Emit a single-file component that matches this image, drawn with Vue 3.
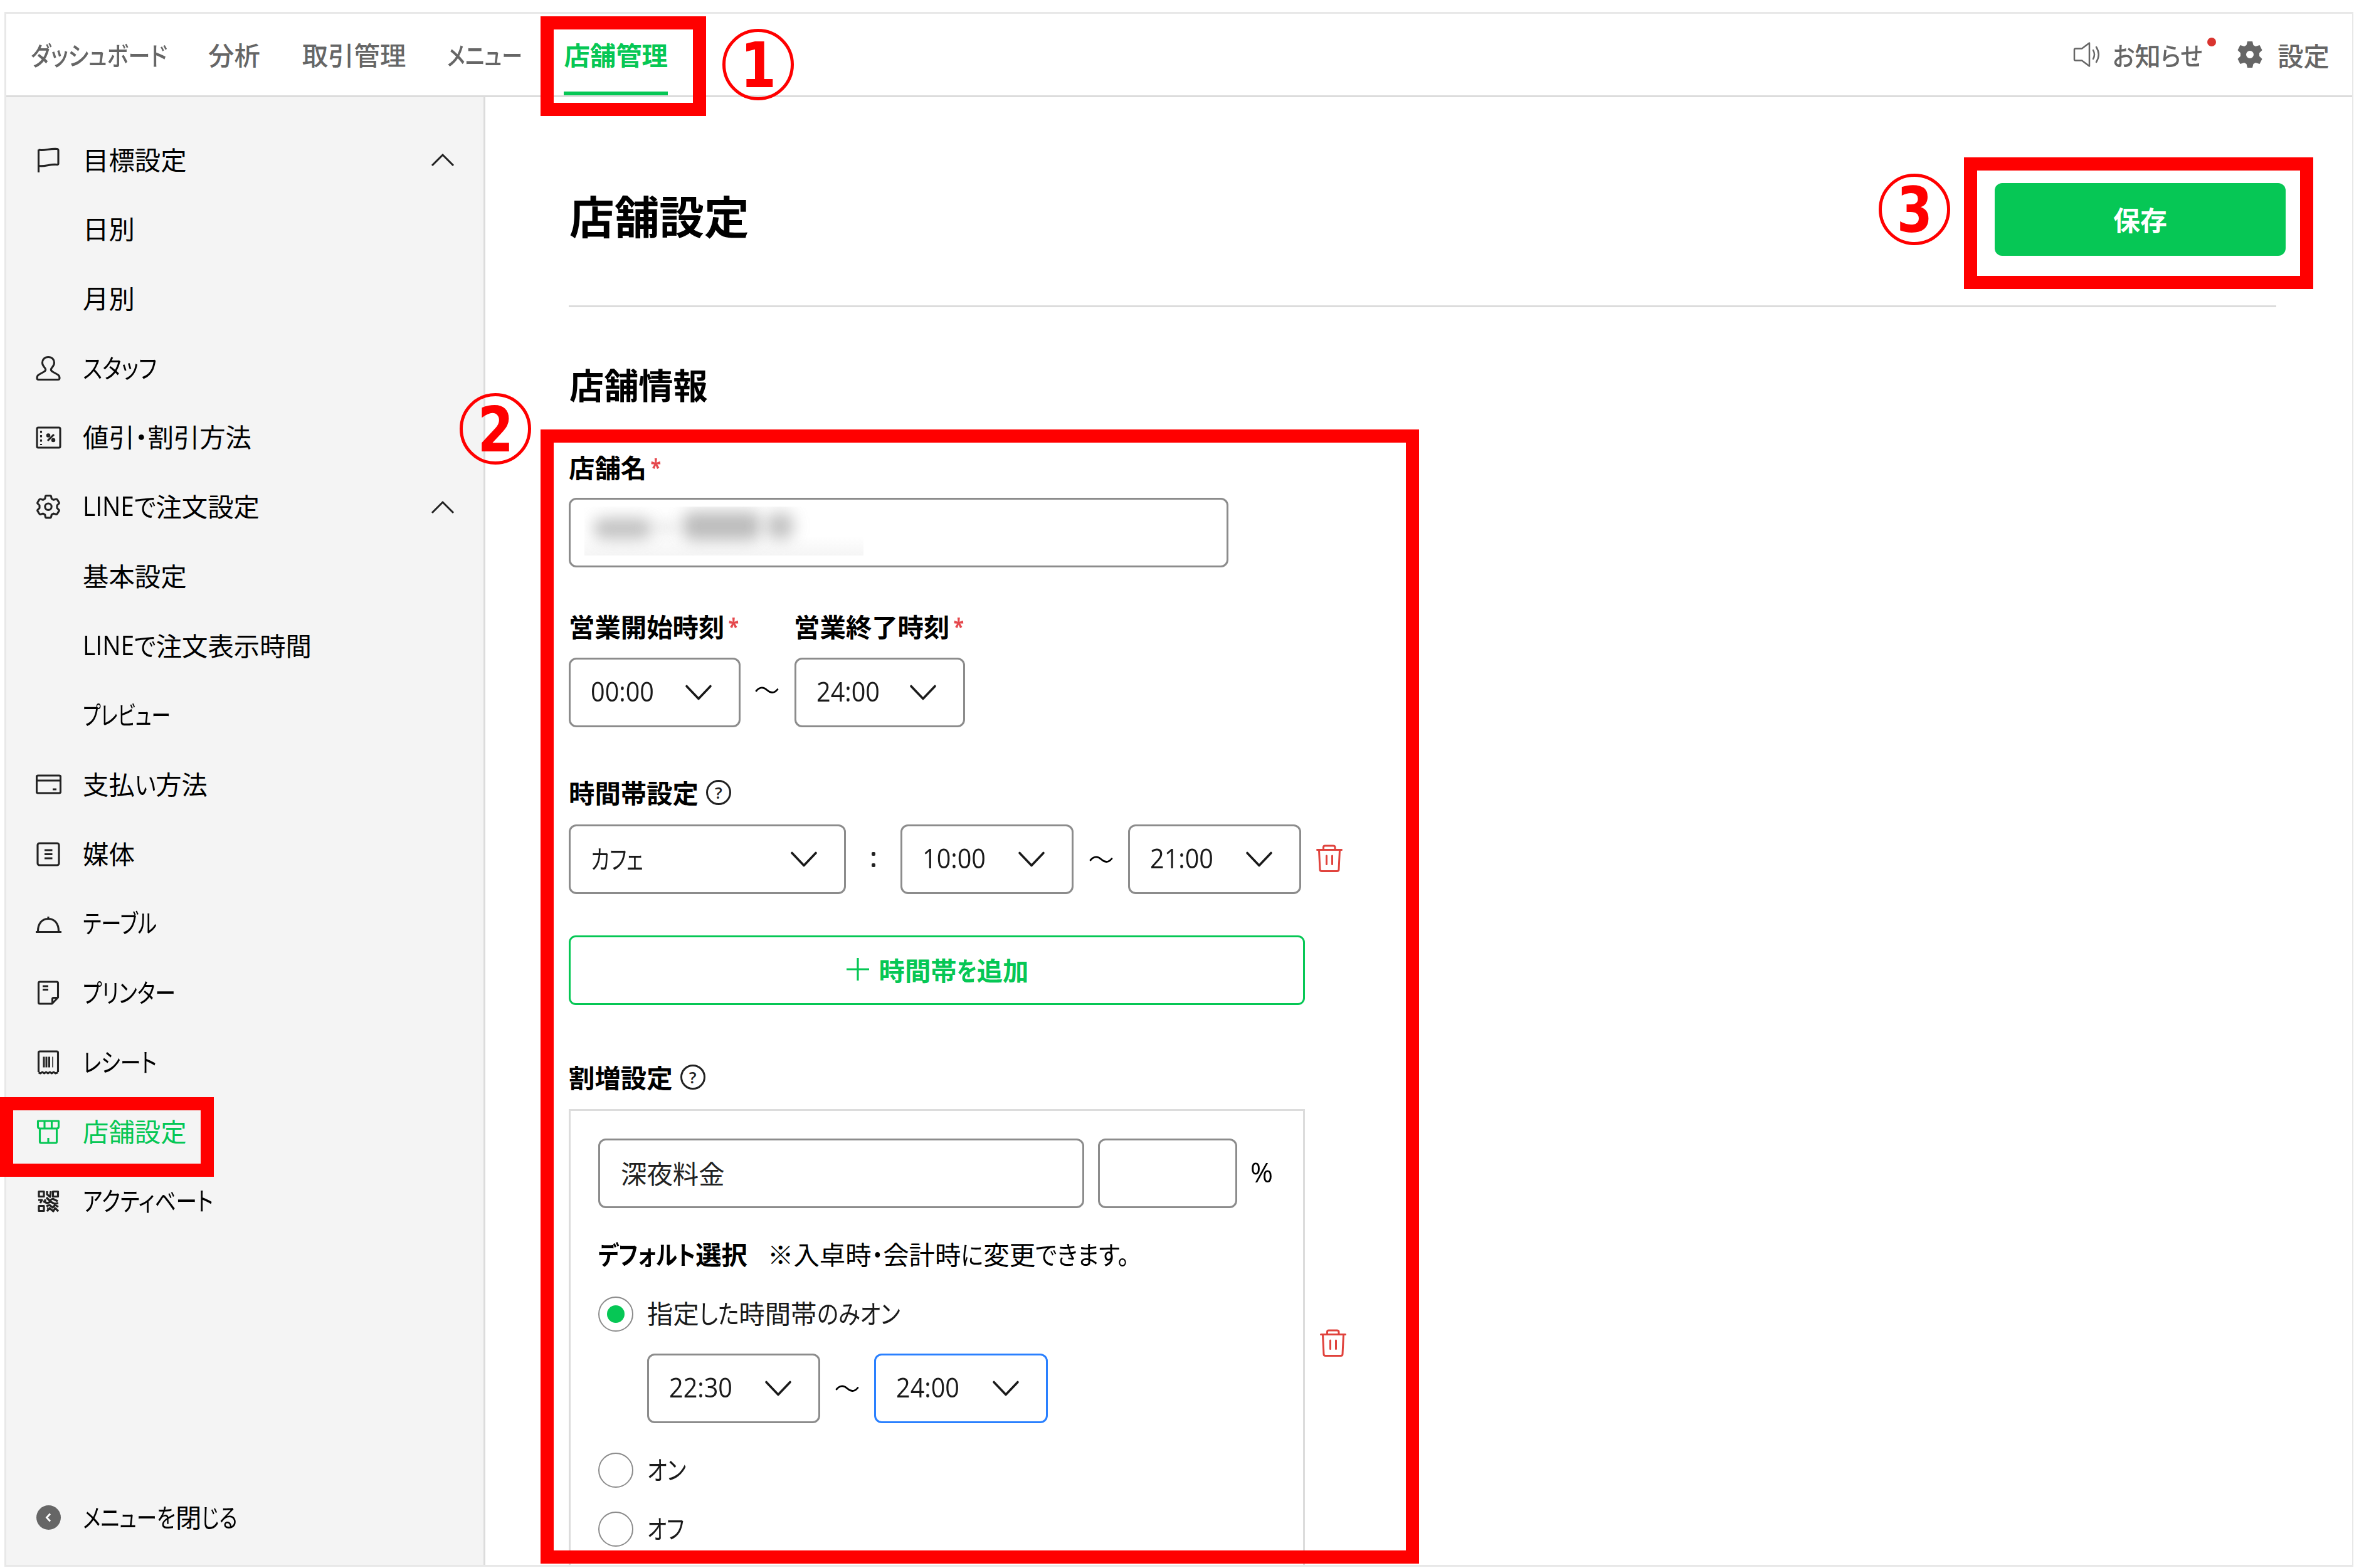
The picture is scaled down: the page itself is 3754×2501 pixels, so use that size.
<script setup>
import { ref, h, onMounted, defineComponent } from 'vue'

// Text set to a given advance width: kanji keep their full width,
// kana and latin runs are condensed to fill what is left.
const Txt = defineComponent({
  props: { s: String, w: Number },
  setup(props) {
    const root = ref(null)
    const widths = ref([])
    const scale = ref(1)
    const runs = props.s.match(/[\u4e00-\u9fff※]+|[\x21-\x7e]+|[^\u4e00-\u9fff※\x21-\x7e]+/g) || []
    const rigid = (r) => /^[\u4e00-\u9fff※]/.test(r)
    onMounted(() => {
      const els = [...root.value.querySelectorAll('.run')]
      const ws = els.map((e) => e.getBoundingClientRect().width)
      let fixed = 0
      let soft = 0
      ws.forEach((v, i) => { if (rigid(runs[i])) fixed += v; else soft += v })
      if (props.w && soft) scale.value = (props.w - fixed) / soft
      widths.value = ws
    })
    return () => h('span', { class: 'txt', ref: root }, runs.map((r, i) => {
      const cls = ['run', { latin: /^[\x21-\x7e]/.test(r), kana: !rigid(r) }]
      if (rigid(r)) return h('span', { class: cls }, r)
      const w = widths.value[i]
      return h('span', { class: 'slot', style: w ? { width: w * scale.value + 'px' } : {} }, [
        h('span', { class: cls, style: w ? { transform: `scaleX(${scale.value})` } : {} }, r)
      ])
    }))
  }
})

const icons = {
  flag: '<path d="M4.500 40V3.500"/><path d="M4.500 4C14 6 22 1.500 34 2.500Q36 3 36 5V26Q36 28 33 27.500C22 26.500 14 31.500 4.500 29.500"/>',
  person: '<path d="M20 2.500c-6 0-9.500 4-9.500 9 0 4 2.500 6.500 4.500 9 1.500 2.500.5 4-2 5.500L5 30.500C2.500 32 2 34 2 36q0 2.500 2.500 2.500h31Q38 38.500 38 36c0-2-.5-4-3-5.500L27 26c-2.500-1.500-3.500-3-2-5.500 2-2.500 4.500-5 4.500-9 0-5-3.500-9-9.500-9z"/>',
  coupon: '<rect x="2" y="4" width="37" height="32" rx="2"/><path d="M8.500 9v23" stroke-dasharray="3.500 3.500"/><path d="M19 25l10-10"/><circle cx="20" cy="16.500" r="1.700"/><circle cx="28" cy="24" r="1.700"/>',
  gear: '<path d="M17 2.500h6q1.300 0 1.600 1.500l.7 3.500 3.200 1.800 3.500-1.200q1.500-.5 2.300.8l2.700 4.400q.8 1.200-.4 2.200L34 18v4.400l2.600 2.500q1.200 1 .4 2.200l-2.700 4.400q-.8 1.300-2.300.8l-3.500-1.200-3.200 1.800-.7 3.500q-.3 1.500-1.600 1.500h-6q-1.300 0-1.600-1.500l-.7-3.500-3.200-1.800-3.500 1.200q-1.500.5-2.300-.8L3 27.100q-.8-1.200.4-2.200L6 22.400V18l-2.600-2.500q-1.200-1-.4-2.200l2.700-4.400q.8-1.300 2.300-.8l3.500 1.200 3.200-1.800.7-3.500q.3-1.500 1.600-1.500z"/><circle cx="20" cy="20.200" r="5.200"/>',
  card: '<rect x="1.500" y="6" width="38" height="28" rx="2"/><path d="M1.500 14h38M27 28h6"/>',
  media: '<rect x="3" y="3" width="34" height="35" rx="3"/><path d="M14 14h12.500M14 20.500h12.500M14 27h12.500"/>',
  cloche: '<path d="M0 33.500h41M3.500 32.500C3.500 20 10 12.500 20 12.500S36.500 20 36.500 32.500M20 12v-3" />',
  printer: '<path d="M4.500 5q0-2 2-2h27q2 0 2 2v23l-9.500 10h-19.500q-2 0-2-2z"/><path d="M35 28.500h-6.500q-2 0-2 2V37M11 10h9M11 15.500h9"/>',
  receipt: '<path d="M4.500 36V5q0-2 2-2h27q2 0 2 2v31M4.500 36.500l3 1.500 3-2 3 2 3-2 3 2 3-2 3 2 3-2 3 2 4-1.500"/><path d="M13 11.500v17M17 11.500v17M21.500 11.500v17" stroke-width="3"/><path d="M27 11.500v17" stroke-width="1.500"/>',
  shop: '<path d="M6.500 15v21q0 2 2 2h23q2 0 2-2V15M3.500 3h33v9q0 3-3 3h-27q-3 0-3-3zM14 3v11M25.500 3v11M20 30v8"/>',
  qr: '<g stroke-width="3.200"><rect x="5" y="4.500" width="8" height="8"/><rect x="27.500" y="4.500" width="8" height="8"/><rect x="5" y="27.500" width="8" height="8"/></g><path d="M18 4v5l5 4 1-9M17 14l5 5 5-3 8 4M4 18h6l-3 5M12 20l6 3 6-2 6 3 6-1M17 28l5-2 5 4 4-4 5 3M18 36l4-5 6 5 3-5 5 5M19 31l-1 0M15 17v5" stroke-width="3.200"/>'
}

const nav = [
  { s: 'ダッシュボード', w: 218, gap: 65 },
  { s: '分析', w: 83, gap: 67 },
  { s: '取引管理', w: 166, gap: 66 },
  { s: 'メニュー', w: 120, gap: 66 },
  { s: '店舗管理', w: 166, gap: 0, active: true }
]
const menu = [
  { s: '目標設定', icon: 'flag', open: true },
  { s: '日別' },
  { s: '月別' },
  { s: 'スタッフ', w: 118, icon: 'person' },
  { s: '値引・割引方法', w: 269, icon: 'coupon' },
  { s: 'LINEで注文設定', w: 282, icon: 'gear', open: true },
  { s: '基本設定' },
  { s: 'LINEで注文表示時間', w: 365 },
  { s: 'プレビュー', w: 140 },
  { s: '支払い方法', w: 199, icon: 'card' },
  { s: '媒体', icon: 'media' },
  { s: 'テーブル', w: 118, icon: 'cloche' },
  { s: 'プリンター', w: 148, icon: 'printer' },
  { s: 'レシート', w: 118, icon: 'receipt' },
  { s: '店舗設定', icon: 'shop', active: true },
  { s: 'アクティベート', w: 208, icon: 'qr' }
]

const stroke = { fill: 'none', stroke: 'currentColor', 'stroke-linecap': 'round', 'stroke-linejoin': 'round' }
const Chevron = () => h('svg', { class: 'chev', width: 44, height: 28, viewBox: '0 0 44 28', ...stroke, 'stroke-width': 3.6 }, [h('path', { d: 'M3 3.500L22 23.500L41 3.500' })])
const Wave = () => h('svg', { class: 'wave', width: 38, height: 16, viewBox: '0 0 38 16', ...stroke, 'stroke-width': 2.8 }, [h('path', { d: 'M2 9C8 2 14 3 19 7.500S30 14 36 6.500' })])
const Trash = () => h('svg', { class: 'trash', width: 42, height: 44, viewBox: '0 0 42 44', ...stroke, 'stroke-width': 3 }, [h('path', { d: 'M1.500 8.500H40.500M11.500 8V4.500Q11.500 2 14 2H27Q30 2 30 4.500V8M4.500 9L6 40Q6 42.500 9 42.500H33Q36 42.500 36 40L37.500 9M16.500 18V31.500M25.500 18V31.500' })])
const Help = () => h('span', { class: 'help' }, '?')
const Select = (p) => h('div', { class: ['select', { focus: p.focus }], style: { width: p.width + 'px' } }, [h(Txt, { s: p.s, w: p.w }), h(Chevron)])
Select.props = { s: String, w: Number, width: Number, focus: Boolean }
</script>

<template>
  <div class="page">
    <div class="window">
      <header class="top">
        <nav class="nav">
          <a v-for="n in nav" :key="n.s" :class="{ active: n.active }" :style="{ marginRight: n.gap + 'px' }"><Txt :s="n.s" :w="n.w" /></a>
        </nav>
        <div class="tools">
          <svg width="44" height="40" viewBox="0 0 44 40" fill="none" stroke="currentColor" stroke-width="2.500" stroke-linejoin="round" stroke-linecap="round"><path d="M2 12Q2 10.500 4 10.500H14L26 1.500V38.500L14 29.500H4Q2 29.500 2 28z" /><path d="M32 13q4 7 0 14M37 8q7.500 12 0 24" /></svg>
          <span class="news"><Txt s="お知らせ" :w="143" /><i class="dot"></i></span>
          <svg class="cog" width="40" height="42" viewBox="0 0 40 42"><path fill="currentColor" fill-rule="evenodd" d="M16 0h8l1.500 6 3.500 2 6.500-2 4 8-4.500 4.500v5L39.500 28l-4 8-6.500-2-3.500 2-1.500 6h-8l-1.500-6-3.500-2-6.500 2-4-8L5 23.500v-5L.5 14l4-8L11 8l3.500-2zM20 15a6 6 0 1 0 0 12 6 6 0 0 0 0-12z" /></svg>
          <Txt s="設定" />
        </div>
      </header>

      <div class="body">
        <aside class="side">
          <div v-for="m in menu" :key="m.s" class="item" :class="{ active: m.active }">
            <span class="ico">
              <svg v-if="m.icon" width="41" height="41" viewBox="0 0 41 41" fill="none" stroke="currentColor" stroke-width="3.100" stroke-linejoin="round" v-html="icons[m.icon]"></svg>
            </span>
            <Txt :s="m.s" :w="m.w" />
            <svg v-if="m.open" class="up" width="38" height="22" viewBox="0 0 38 22" fill="none" stroke="#222" stroke-width="3"><path d="M2 20L19 3L36 20" /></svg>
          </div>
          <div class="item close">
            <span class="ico">
              <svg width="41" height="41" viewBox="0 0 41 41"><circle cx="20.500" cy="20.500" r="19.500" fill="#666" /><path d="M23 14.500L17.500 20.500L23 26.500" fill="none" stroke="#fff" stroke-width="2.800" /></svg>
            </span>
            <Txt s="メニューを閉じる" :w="247" />
          </div>
        </aside>

        <main class="main">
          <div class="title-row">
            <h1><Txt s="店舗設定" /></h1>
            <button class="save"><Txt s="保存" /></button>
          </div>
          <h2><Txt s="店舗情報" /></h2>

          <div class="label first"><Txt s="店舗名" /><b class="req">*</b></div>
          <div class="input name"><div class="masked"><span class="m1"></span><span class="m2"></span><span class="m3"></span><span class="m4"></span></div></div>

          <div class="label pair">
            <div class="col"><Txt s="営業開始時刻" /><b class="req">*</b></div>
            <div class="col"><Txt s="営業終了時刻" /><b class="req">*</b></div>
          </div>
          <div class="row hours">
            <Select s="00:00" :w="101" :width="274" /><Wave /><Select s="24:00" :w="101" :width="272" />
          </div>

          <div class="label zone"><Txt s="時間帯設定" /><Help /></div>
          <div class="row slots">
            <Select s="カフェ" :w="84" :width="442" />
            <span class="colon"><i></i><i></i></span>
            <Select s="10:00" :w="101" :width="276" /><Wave /><Select s="21:00" :w="101" :width="276" />
            <Trash />
          </div>
          <button class="add">
            <svg width="36" height="36" viewBox="0 0 36 36" stroke="currentColor" stroke-width="3.200"><path d="M0 18H36M18 0V36" /></svg>
            <Txt s="時間帯を追加" :w="239" />
          </button>

          <div class="label extra"><Txt s="割増設定" /><Help /></div>
          <div class="charge">
            <div class="card">
              <div class="row">
                <div class="input fee"><Txt s="深夜料金" /></div>
                <div class="input rate"></div>
                <Txt s="%" :w="36" />
              </div>
              <div class="label default"><Txt s="デフォルト選択" :w="238" /><Txt class="note" s="※入卓時・会計時に変更できます。" :w="577" /></div>
              <div class="radio r1"><i class="on"></i><Txt s="指定した時間帯のみオン" :w="403" /></div>
              <div class="row range">
                <Select s="22:30" :w="101" :width="276" /><Wave /><Select s="24:00" :w="101" :width="277" :focus="true" />
              </div>
              <div class="radio r2"><i></i><Txt s="オン" :w="62" /></div>
              <div class="radio r3"><i></i><Txt s="オフ" :w="59" /></div>
            </div>
            <Trash />
          </div>
        </main>
      </div>
    </div>

    <div class="mark box1"></div>
    <div class="mark box2"></div>
    <div class="mark box3"></div>
    <div class="mark box4"></div>
    <div class="num n1"><span>1</span></div>
    <div class="num n2"><span>2</span></div>
    <div class="num n3"><span>3</span></div>
  </div>
</template>

<style>
body { margin: 0; background: #fff; overflow: hidden; }
.txt { display: inline-flex; align-items: center; white-space: nowrap; margin-top: -0.135em; flex: none; }
.txt .slot { display: inline-block; flex: none; }
.txt .run { display: inline-block; white-space: nowrap; flex: none; transform-origin: 0 50%; }
.txt .kana { font-feature-settings: "palt"; }
.txt .latin { font-family: "Open Sans", "Noto Sans", sans-serif; font-size: 1.04em; padding-top: 0.05em; }
.select {
  box-sizing: border-box; height: 111px; border: 3px solid #8c8c8c; border-radius: 12px; color: #1a1a1a;
  display: flex; align-items: center; justify-content: space-between; padding: 0 42px 0 32px; flex: none;
}
.select.focus { border-color: #2a80ff; }
.help {
  box-sizing: border-box; width: 40px; height: 40px; border: 3px solid #222; border-radius: 50%; margin: -4px 0 0 12px;
  display: flex; align-items: center; justify-content: center; font: 600 26px/1 "Open Sans", sans-serif; color: #222;
}
.trash { color: #e0423c; flex: none; }
.wave, .chev { flex: none; }
</style>

<style scoped>
.page {
  position: relative; box-sizing: border-box; width: 3754px; height: 2501px; padding: 19px 1px 2px 7px; overflow: hidden;
  background: #fff; color: #000; font-family: "Noto Sans CJK JP", "Noto Sans", sans-serif; font-size: 41.4px; line-height: 60px;
}
.window { box-sizing: border-box; height: 2480px; border: 3px solid #e8e8e8; border-right-width: 2px; display: flex; flex-direction: column; overflow: hidden; }
.top {
  box-sizing: border-box; height: 133px; flex: none; border-bottom: 3px solid #dcdcdc; color: #666; font-weight: 500;
  display: flex; justify-content: space-between; padding: 0 36px 0 39px;
}
.nav { display: flex; }
.nav a { box-sizing: border-box; height: 130px; display: flex; align-items: center; padding-top: 10px; border-bottom: 6px solid transparent; }
.nav a.active { color: #06c755; border-bottom-color: #06c755; font-weight: 700; }
.tools { display: flex; align-items: center; height: 130px; }
.tools .txt { position: relative; top: 3px; }
.news { position: relative; margin-left: 19px; display: flex; }
.dot { position: absolute; width: 14px; height: 14px; border-radius: 50%; background: #d9342f; left: 151px; top: 0; }
.cog { margin: 0 24px 0 56px; }

.body { flex: 1; display: flex; min-height: 0; }
.side { box-sizing: border-box; width: 764px; flex: none; background: #f4f4f4; border-right: 3px solid #dcdcdc; padding-top: 45px; display: flex; flex-direction: column; }
.item { height: 110.730px; flex: none; display: flex; align-items: center; padding: 0 46px 0 47px; }
.item.active { color: #06c755; }
.ico { width: 41px; height: 41px; margin-right: 34px; flex: none; }
.ico svg { display: block; }
.item:not(.active):not(.close) .ico { color: #222; }
.up { margin-left: auto; }
.close { margin-top: auto; margin-bottom: 20px; }

.main { flex: 1; min-width: 0; padding: 0 121px 0 133px; }
.title-row { display: flex; justify-content: space-between; height: 195px; padding-top: 137px; border-bottom: 3px solid #dcdcdc; align-items: flex-start; }
h1 { margin: 0 0 0 1px; font-size: 71.700px; line-height: 108px; height: 110px; font-weight: 700; display: flex; align-items: center; }
h2 { margin: 86px 0 0 1px; font-size: 55.200px; line-height: 80px; height: 80px; font-weight: 700; display: flex; align-items: center; }
button { font: inherit; padding: 0; border: 0; display: flex; align-items: center; justify-content: center; font-weight: 700; }
.save { width: 464px; height: 116px; border-radius: 12px; background: #06c755; color: #fff; margin-right: -15px; font-size: 43px; line-height: 60px; padding-top: 3px; }
.label { display: flex; align-items: center; height: 60px; font-weight: 700; }
.first { margin-top: 61px; }
.req { color: #e5484d; font: 700 36px/40px "Open Sans", sans-serif; margin: -4px 0 0 5px; height: 40px; transform: scaleX(.85); }
.input { box-sizing: border-box; height: 111px; border: 3px solid #8c8c8c; border-radius: 12px; display: flex; align-items: center; color: #222; }
.name { width: 1052px; margin-top: 17px; padding-left: 22px; }
.masked { width: 445px; height: 78px; margin-top: -6px; background: linear-gradient(#fff0 60%, #f5f5f5); display: flex; align-items: flex-start; overflow: hidden; }
.masked span { display: block; border-radius: 14px; background: #aaa; filter: blur(12px); flex: none; }
.m1 { width: 92px; height: 34px; margin: 18px 0 0 15px; opacity: .72; }
.m2 { width: 34px; height: 20px; margin: 24px 0 0 6px; opacity: .3; }
.m3 { width: 124px; height: 46px; margin: 8px 0 0 10px; opacity: .78; }
.m4 { width: 42px; height: 42px; margin: 10px 0 0 10px; opacity: .72; }

.pair { margin-top: 66px; }
.col { width: 359px; display: flex; align-items: center; }
.row { display: flex; align-items: center; }
.hours { margin-top: 18px; }
.hours .wave { margin: -8px 25px 0 23px; }
.zone { margin-top: 76px; }
.slots { margin-top: 19px; }
.slots .wave { margin: 0 24px 0 25px; }
.slots .trash { margin: -3px 0 0 24px; }
.colon { width: 87px; display: flex; flex-direction: column; align-items: center; gap: 12px; }
.colon i { width: 6px; height: 6px; border-radius: 2px; background: #222; }
.add { box-sizing: border-box; width: 1174px; height: 111px; margin-top: 66px; border: 3px solid #06c755; border-radius: 11px; background: #fff; color: #06c755; gap: 16px; padding: 3px 0 0 2px; }
.add svg { margin-top: -7px; }
.extra { margin-top: 87px; }
.charge { display: flex; margin-top: 19px; }
.card { box-sizing: border-box; width: 1174px; height: 800px; border: 3px solid #dcdcdc; padding: 44px; }
.charge .trash { margin: 351px 0 0 24px; }
.fee { width: 775px; padding-left: 33px; padding-top: 2px; }
.rate { width: 222px; margin: 0 21px 0 22px; }
.default { margin-top: 45px; }
.note { font-weight: 400; margin-left: 32px; }
.radio { display: flex; align-items: center; height: 56px; gap: 22px; color: #1a1a1a; }
.radio i { box-sizing: border-box; width: 56px; height: 56px; border: 2.500px solid #8c8c8c; border-radius: 50%; display: flex; align-items: center; justify-content: center; }
.radio i.on::after { content: ""; width: 28px; height: 28px; border-radius: 50%; background: #06c755; }
.r1 { margin-top: 36px; }
.range { margin: 35px 0 0 78px; }
.range .wave { margin: 0 24px; }
.r2 { margin-top: 47px; }
.r3 { margin-top: 38px; }

.mark { position: absolute; box-sizing: border-box; border: 21px solid #f00; }
.box1 { left: 862px; top: 26px; width: 264px; height: 159px; }
.box2 { left: 862px; top: 685px; width: 1401px; height: 1809px; }
.box3 { left: 3132px; top: 251px; width: 557px; height: 210px; }
.box4 { left: 0; top: 1750px; width: 341px; height: 127px; }
.num {
  position: absolute; box-sizing: border-box; width: 114px; height: 114px; border: 5px solid #f00; border-radius: 50%; color: #f00;
  display: flex; align-items: center; justify-content: center; font: 700 99px/104px "DejaVu Sans", sans-serif;
}
.num span { transform: scaleX(.83); padding-top: 3px; }
.n1 { left: 1152px; top: 46px; }
.n2 { left: 733px; top: 627px; }
.n3 { left: 2996px; top: 277px; }
</style>
